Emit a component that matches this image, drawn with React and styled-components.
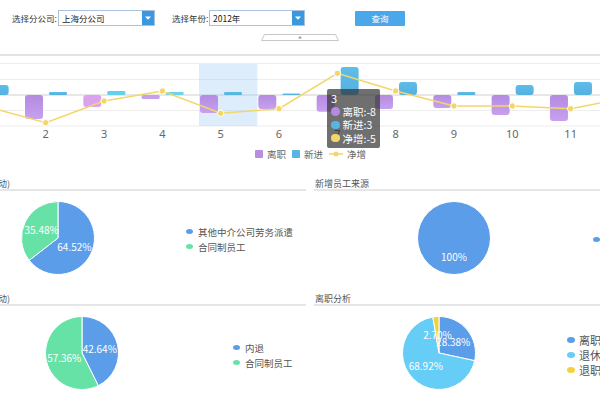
import React from "react";
import styled, { createGlobalStyle } from "styled-components";

const GlobalStyle = createGlobalStyle`
  html, body { margin: 0; padding: 0; background: #fff; }
  body { font-family: "Noto Sans CJK SC", "Noto Sans", sans-serif; }
`;

const Page = styled.div`
  width: 600px;
  height: 400px;
  overflow: hidden;
  position: relative;
  background: #fff;
`;

const Toolbar = styled.div`
  display: flex;
  align-items: center;
  padding: 10px 0 0 12px;
  height: 16px;
`;

const Label = styled.span`
  width: ${(p) => p.$w}px;
  font-size: 8.5px;
  color: #333;
  white-space: nowrap;
  line-height: 16px;
`;

const SelectBox = styled.div`
  width: ${(p) => p.$w}px;
  height: 16px;
  box-sizing: border-box;
  border: 1px solid #a9c3de;
  display: flex;
  align-items: center;
  margin-right: ${(p) => p.$mr || 0}px;
  background: #fff;
`;

const SelectText = styled.span`
  flex: 1;
  padding-left: 3px;
  font-size: 8.5px;
  color: #222;
  white-space: nowrap;
`;

const SelectArrow = styled.span`
  width: 12px;
  height: 14px;
  background: #3b98df;
  display: flex;
  align-items: center;
  justify-content: center;
`;

const QueryButton = styled.button`
  width: 50px;
  height: 15px;
  margin-left: 50px;
  padding: 0;
  border: none;
  border-radius: 1px;
  background: #4aa7ea;
  color: #fff;
  font-family: inherit;
  font-size: 8.5px;
  line-height: 15px;
`;

const HandleRow = styled.div`
  margin-top: 8px;
  height: 7px;
  display: flex;
  justify-content: center;
  svg { display: block; }
`;

const Divider = styled.div`
  margin-top: 13px;
  border-top: 2px solid #e3e3e3;
`;

const ChartWrap = styled.div`
  position: relative;
  height: 89px;
  svg { display: block; }
`;

const Tooltip = styled.div`
  position: absolute;
  left: 327px;
  top: 33px;
  width: 53px;
  height: 59px;
  box-sizing: border-box;
  padding: 3px 4px;
  background: rgba(50, 50, 50, 0.7);
  border-radius: 2px;
  color: #fff;
  font-size: 10.5px;
`;

const TipTitle = styled.div`
  line-height: 13px;
  font-size: 11px;
`;

const TipRow = styled.div`
  display: flex;
  align-items: center;
  gap: 3px;
  height: 13.3px;
  white-space: nowrap;
`;

const TipDot = styled.span`
  width: 8.5px;
  height: 8.5px;
  border-radius: 50%;
  background: ${(p) => p.$c};
  flex-shrink: 0;
`;

const ChartLegend = styled.div`
  display: flex;
  align-items: center;
  gap: 6px;
  padding-left: 255px;
  margin-top: 3px;
  height: 11px;
`;

const ChartLegendItem = styled.div`
  display: flex;
  align-items: center;
  gap: 4px;
  font-size: 9.5px;
  color: #666;
  white-space: nowrap;
`;

const LegendSquare = styled.span`
  width: 8px;
  height: 8px;
  border-radius: 1px;
  background: ${(p) => p.$c};
`;

const Panels = styled.div`
  display: grid;
  grid-template-columns: 393px 393px;
  column-gap: 8px;
  margin-left: -87px;
  margin-top: 15px;
`;

const Panel = styled.div`
  display: flex;
  flex-direction: column;
`;

const PanelHeader = styled.div`
  height: 15px;
  border-bottom: 2px solid #e6e6e6;
  display: flex;
  align-items: flex-end;
  padding-left: 1px;
  font-size: 9px;
  line-height: 11px;
  color: #555;
  white-space: nowrap;
`;

const PanelBody = styled.div`
  height: 98px;
  display: flex;
  align-items: flex-start;
`;

const PieSvg = styled.svg`
  width: 100px;
  height: 98px;
  margin-left: ${(p) => p.$ml}px;
  flex-shrink: 0;
  display: block;
`;

const PieLegend = styled.div`
  display: flex;
  flex-direction: column;
  margin-left: ${(p) => p.$ml}px;
  margin-top: ${(p) => p.$mt}px;
`;

const PieLegendItem = styled.div`
  height: 15px;
  display: flex;
  align-items: center;
  gap: ${(p) => (p.$fs > 10 ? 4 : 5)}px;
  font-size: ${(p) => p.$fs}px;
  color: #555;
  white-space: nowrap;
`;

const LegendDot = styled.span`
  width: ${(p) => (p.$fs > 10 ? 8 : 7)}px;
  height: ${(p) => (p.$fs > 10 ? 6 : 5)}px;
  border-radius: 50%;
  background: ${(p) => p.$c};
  flex-shrink: 0;
`;

const BLUE = "#5b9de9";
const GREEN = "#67e2a7";
const SKY = "#66cdf6";
const YELLOW = "#f2d13f";
const LINE = "#f3d66b";

const Arrow = () => (
  <svg width="6" height="4" viewBox="0 0 6 4">
    <path d="M0 0.5 L6 0.5 L3 3.8 Z" fill="#fff" />
  </svg>
);

const cxOf = (m) => 45.7 + (m - 2) * 58.33;

const months = [
  { m: 1, lz: null, xj: 85, pt: 106.7 },
  { m: 2, lz: 119, xj: 92, pt: 122.7 },
  { m: 3, lz: 107, xj: 91, pt: 101, lc: "#dba3ef", xc: "#62d1f0" },
  { m: 4, lz: 99, xj: 92, pt: 91, lc: "#c7a0ea", xc: "#6cd3ef" },
  { m: 5, lz: 113, xj: 92, pt: 113.3 },
  { m: 6, lz: 109, xj: 93.5, pt: 108.7 },
  { m: 7, lz: 111.7, xj: 67, pt: 73.3 },
  { m: 8, lz: 109, xj: 82, pt: 91 },
  { m: 9, lz: 108, xj: 92, pt: 106 },
  { m: 10, lz: 115, xj: 85, pt: 106 },
  { m: 11, lz: 121, xj: 82, pt: 108.7 },
  { m: 12, lz: null, xj: null, pt: 97.4 },
];

const BarChart = () => {
  const linePts = months.map((d) => `${cxOf(d.m).toFixed(1)},${d.pt}`).join(" ");
  return (
    <svg width="600" height="89" viewBox="0 56 600 89">
      <defs>
        <linearGradient id="lzg" x1="0" y1="0" x2="0" y2="1">
          <stop offset="0" stopColor="#b48be0" />
          <stop offset="1" stopColor="#c7a0ef" />
        </linearGradient>
        <linearGradient id="xjg" x1="0" y1="0" x2="0" y2="1">
          <stop offset="0" stopColor="#5fbde8" />
          <stop offset="1" stopColor="#54b0e0" />
        </linearGradient>
      </defs>
      {[63.5, 79.5, 110.5, 126].map((y) => (
        <line key={y} x1="0" x2="600" y1={y} y2={y} stroke="#ededed" strokeWidth="1" />
      ))}
      <line x1="0" x2="600" y1="95" y2="95" stroke="#cfcfcf" strokeWidth="1" />
      <rect x="199" y="64" width="58.3" height="62" fill="rgba(150,200,245,0.32)" />
      {months.map((d) => {
        const cx = cxOf(d.m);
        return (
          <g key={d.m}>
            {d.lz && (
              <rect x={cx - 20.7} y={95} width={18} height={d.lz - 95} rx={d.lz - 95 > 6 ? 3 : 1.5}
                fill={d.lc || "url(#lzg)"} />
            )}
            {d.xj && (
              <rect x={cx + 3.3} y={d.xj} width={18} height={95 - d.xj} rx={95 - d.xj > 6 ? 3 : 1.2}
                fill={d.xc || "url(#xjg)"} />
            )}
          </g>
        );
      })}
      <polyline points={linePts} fill="none" stroke={LINE} strokeWidth="1.5" />
      {months.map((d) => (
        <circle key={d.m} cx={cxOf(d.m)} cy={d.pt} r="3.2" fill={LINE} stroke="#fff" strokeWidth="1" />
      ))}
      {months.slice(1, 11).map((d) => (
        <text key={d.m} x={cxOf(d.m)} y="133.5" textAnchor="middle" dominantBaseline="central"
          fontSize="11" fill="#666" fontFamily="'Noto Sans', sans-serif">
          {d.m}
        </text>
      ))}
    </svg>
  );
};

const polar = (cx, cy, r, deg) => {
  const a = (deg * Math.PI) / 180;
  return [cx + r * Math.sin(a), cy - r * Math.cos(a)];
};

const Pie = ({ slices, ml, labelOrder }) => {
  const cx = 50, cy = 47, r = 36.5;
  let acc = 0;
  const parts = slices.map((s) => {
    const a0 = (acc / 100) * 360;
    acc += s.v;
    const a1 = (acc / 100) * 360;
    return { ...s, a0, a1, mid: (a0 + a1) / 2 };
  });
  const order = labelOrder || parts.map((_, i) => i);
  return (
    <PieSvg $ml={ml} viewBox="0 0 100 98">
      {parts.map((p, i) => {
        if (p.v >= 100) {
          return <circle key={i} cx={cx} cy={cy} r={r} fill={p.c} stroke="#fff" strokeWidth="1" />;
        }
        const [x0, y0] = polar(cx, cy, r, p.a0);
        const [x1, y1] = polar(cx, cy, r, p.a1);
        const large = p.a1 - p.a0 > 180 ? 1 : 0;
        return (
          <path key={i}
            d={`M${cx},${cy} L${x0},${y0} A${r},${r} 0 ${large} 1 ${x1},${y1} Z`}
            fill={p.c} stroke="#fff" strokeWidth="1" strokeLinejoin="round" />
        );
      })}
      {order.map((i) => {
        const p = parts[i];
        const [lx, ly] = polar(cx, cy, r / 2, p.mid);
        return (
          <text key={`l${i}`} x={lx} y={ly} textAnchor="middle" dominantBaseline="central"
            fontSize="10" fill="#fff" fontFamily="'Noto Sans CJK SC', sans-serif">
            {p.label || `${p.v.toFixed(2)}%`}
          </text>
        );
      })}
    </PieSvg>
  );
};

const panels = [
  {
    title: "在职员工构成(按月变动)",
    pieMl: 95,
    slices: [{ v: 64.52, c: BLUE }, { v: 35.48, c: GREEN }],
    legend: { ml: 78, mt: 33, fs: 9.5, items: [{ c: BLUE, t: "其他中介公司劳务派遣" }, { c: GREEN, t: "合同制员工" }] },
  },
  {
    title: "新增员工来源",
    pieMl: 90,
    slices: [{ v: 100, c: BLUE, label: "100%" }],
    legend: { ml: 89, mt: 40.5, fs: 9.5, items: [{ c: BLUE, t: "其他中介公司劳务派遣" }] },
  },
  {
    title: "离职员工构成(按月变动)",
    pieMl: 119,
    slices: [{ v: 42.64, c: BLUE }, { v: 57.36, c: GREEN }],
    legend: { ml: 101, mt: 34, fs: 9.5, items: [{ c: BLUE, t: "内退" }, { c: GREEN, t: "合同制员工" }] },
  },
  {
    title: "离职分析",
    pieMl: 75,
    slices: [{ v: 28.38, c: BLUE }, { v: 68.92, c: SKY }, { v: 2.7, c: YELLOW }],
    labelOrder: [2, 0, 1],
    legend: { ml: 78, mt: 26.5, fs: 11, items: [{ c: BLUE, t: "离职" }, { c: SKY, t: "退休" }, { c: YELLOW, t: "退职" }] },
  },
];

export default function App() {
  return (
    <Page>
      <GlobalStyle />
      <Toolbar>
        <Label $w={46}>选择分公司:</Label>
        <SelectBox $w={97} $mr={17}>
          <SelectText>上海分公司</SelectText>
          <SelectArrow><Arrow /></SelectArrow>
        </SelectBox>
        <Label $w={37}>选择年份:</Label>
        <SelectBox $w={96}>
          <SelectText>2012年</SelectText>
          <SelectArrow><Arrow /></SelectArrow>
        </SelectBox>
        <QueryButton>查询</QueryButton>
      </Toolbar>
      <HandleRow>
        <svg width="78" height="7" viewBox="0 0 78 7">
          <path d="M0.5,6.5 L3.5,0.5 L74.5,0.5 L77.5,6.5 Z" fill="#fff" stroke="#c8c8c8" strokeWidth="1" />
          <path d="M37,4.5 L39,2 L41,4.5 Z" fill="#9a9a9a" />
        </svg>
      </HandleRow>
      <Divider />
      <ChartWrap>
        <BarChart />
        <Tooltip>
          <TipTitle>3</TipTitle>
          <TipRow><TipDot $c="#b48be0" />离职:-8</TipRow>
          <TipRow><TipDot $c="#58b5e3" />新进:3</TipRow>
          <TipRow><TipDot $c={LINE} />净增:-5</TipRow>
        </Tooltip>
      </ChartWrap>
      <ChartLegend>
        <ChartLegendItem><LegendSquare $c="#b68ee2" />离职</ChartLegendItem>
        <ChartLegendItem><LegendSquare $c="#58b5e3" />新进</ChartLegendItem>
        <ChartLegendItem>
          <svg width="14" height="8" viewBox="0 0 14 8">
            <line x1="0" x2="14" y1="4" y2="4" stroke={LINE} strokeWidth="1.5" />
            <circle cx="7" cy="4" r="2.5" fill={LINE} />
          </svg>
          净增
        </ChartLegendItem>
      </ChartLegend>
      <Panels>
        {panels.map((p, i) => (
          <Panel key={i}>
            <PanelHeader>{p.title}</PanelHeader>
            <PanelBody>
              <Pie slices={p.slices} ml={p.pieMl} labelOrder={p.labelOrder} />
              <PieLegend $ml={p.legend.ml} $mt={p.legend.mt}>
                {p.legend.items.map((it) => (
                  <PieLegendItem key={it.t} $fs={p.legend.fs}>
                    <LegendDot $c={it.c} $fs={p.legend.fs} />
                    {it.t}
                  </PieLegendItem>
                ))}
              </PieLegend>
            </PanelBody>
          </Panel>
        ))}
      </Panels>
    </Page>
  );
}
